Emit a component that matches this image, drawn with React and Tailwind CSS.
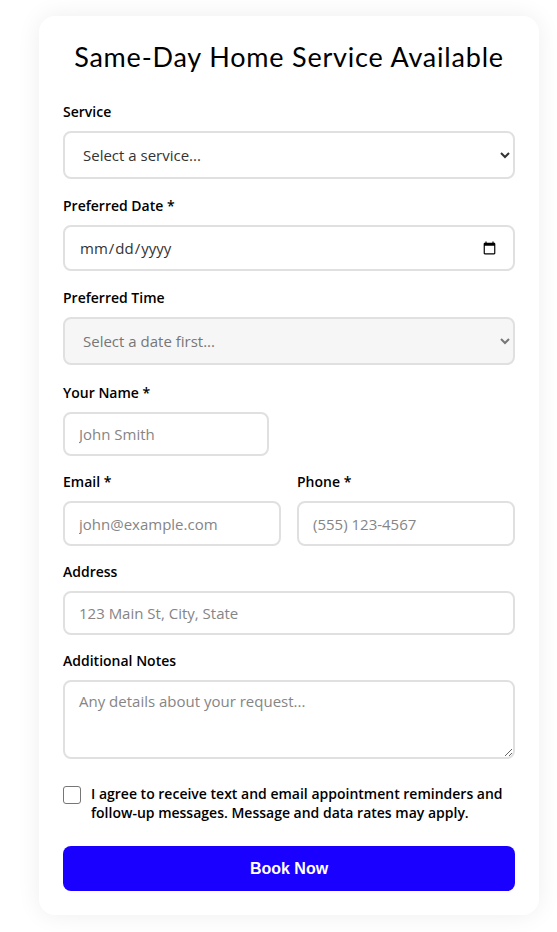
import React from "react";

const label = "block text-[14px] leading-[20px] font-semibold text-black mb-[9px]";
const field =
  "block w-full border-2 border-[#e0e0e0] rounded-[8px] bg-white px-[14px] text-[15px] text-[#333] placeholder:text-[#858585] outline-none";

export default function App() {
  return (
    <div className="min-h-[932px] bg-white pt-[16px] pb-[16px] px-[39px]" style={{ fontFamily: '"Open Sans", sans-serif' }}>
      <div className="w-[500px] bg-white rounded-[16px] shadow-[0_0_24px_rgba(0,0,0,0.07)] px-[24px] pt-[25px] pb-[24px]">
        <h1
          className="text-center text-[27px] leading-[32px] text-black mb-[29px] tracking-[0.8px]"
          style={{ fontFamily: '"Lato", sans-serif' }}
        >
          Same-Day Home Service Available
        </h1>

        <div className="mb-[17px]">
          <label className={label}>Service</label>
          <select className={field + " h-[48px] px-[13px]"} defaultValue="">
            <option value="">Select a service...</option>
          </select>
        </div>

        <div className="mb-[17px]">
          <label className={label}>Preferred Date *</label>
          <input type="date" className={field + " h-[46px]"} />
        </div>

        <div className="mb-[18px]">
          <label className={label}>Preferred Time</label>
          <select disabled className={field + " h-[48px] px-[13px] !bg-[#f6f6f6] text-[#777]"} defaultValue="">
            <option value="">Select a date first...</option>
          </select>
        </div>

        <div className="mb-[16px]">
          <label className={label}>Your Name *</label>
          <input type="text" placeholder="John Smith" className={field + " h-[44px] !w-[206px]"} />
        </div>

        <div className="grid grid-cols-2 gap-[16px] mb-[16px]">
          <div>
            <label className={label}>Email *</label>
            <input type="email" placeholder="john@example.com" className={field + " h-[45px]"} />
          </div>
          <div>
            <label className={label}>Phone *</label>
            <input type="tel" placeholder="(555) 123-4567" className={field + " h-[45px]"} />
          </div>
        </div>

        <div className="mb-[16px]">
          <label className={label}>Address</label>
          <input type="text" placeholder="123 Main St, City, State" className={field + " h-[44px]"} />
        </div>

        <div className="mb-[25px]">
          <label className={label}>Additional Notes</label>
          <textarea
            placeholder="Any details about your request..."
            className={field + " h-[79px] py-[8px]"}
          />
        </div>

        <div className="flex items-start gap-[10px] mb-[24px]">
          <input
            type="checkbox"
            className="mt-[2px] w-[18px] h-[18px] shrink-0 appearance-none border border-[#767676] rounded-[3px] bg-white"
          />
          <span className="text-[14px] leading-[19px] font-semibold text-black">
            I agree to receive text and email appointment reminders and follow-up messages. Message and data rates may apply.
          </span>
        </div>

        <button
          type="button"
          className="w-full h-[45px] rounded-[8px] bg-[#1a00ff] text-white text-[16px] font-bold"
          style={{ fontFamily: '"Liberation Sans", Arial, sans-serif' }}
        >
          Book Now
        </button>
      </div>
    </div>
  );
}
